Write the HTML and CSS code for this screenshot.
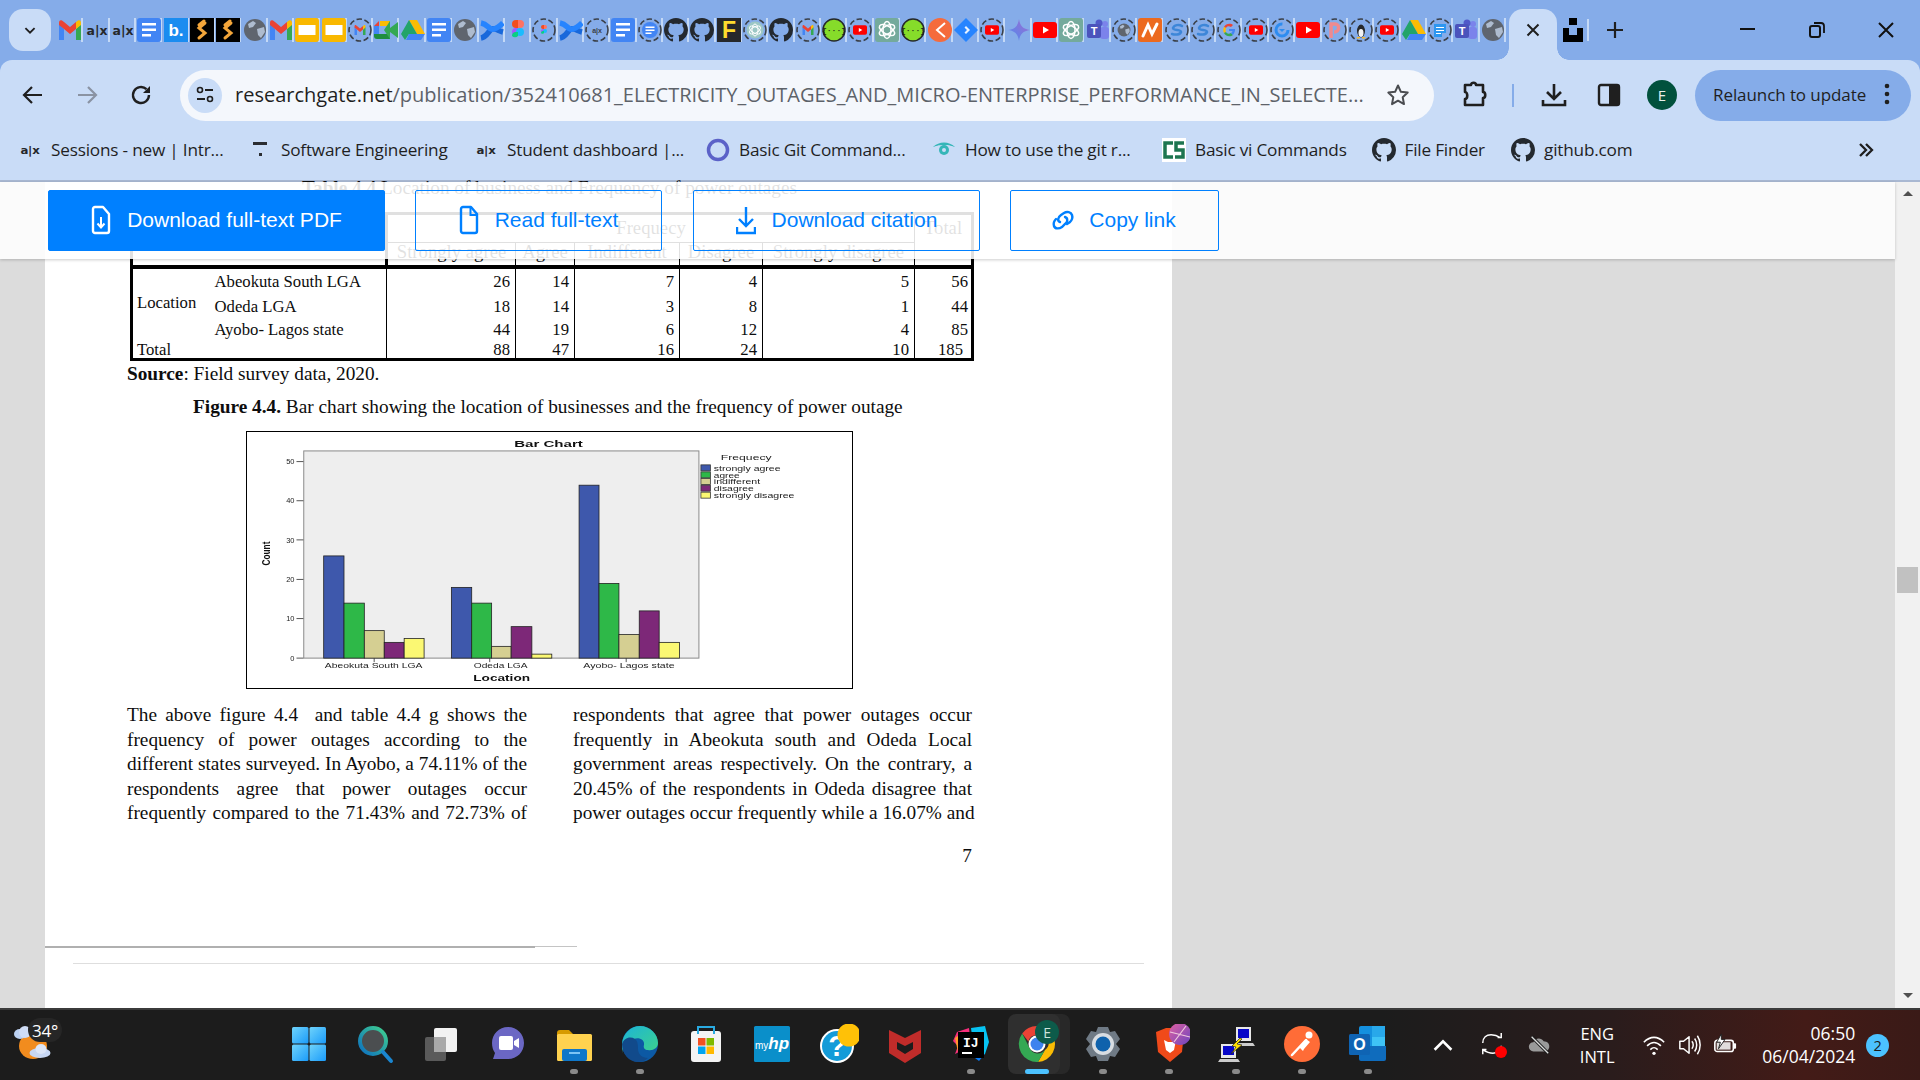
FILE: index.html
```html
<!DOCTYPE html>
<html lang="en">
<head>
<meta charset="utf-8">
<title>ResearchGate</title>
<link rel="stylesheet" href="styles.css">
</head>
<body>
<svg class="defs" aria-hidden="true">
  <defs>
    <linearGradient id="gStart" x1="0" y1="0" x2="1" y2="1"><stop offset="0" stop-color="#6fd3fb"/><stop offset="1" stop-color="#1a9bfa"/></linearGradient>
    <linearGradient id="gGem" x1="0" y1="1" x2="1" y2="0"><stop offset="0" stop-color="#4c8df0"/><stop offset="1" stop-color="#a06ad0"/></linearGradient>
    <linearGradient id="gEdge" x1="0" y1="0" x2="1" y2="1"><stop offset="0" stop-color="#1cb4d8"/><stop offset="1" stop-color="#3ed38a"/></linearGradient>
    <linearGradient id="gSearch" x1="0" y1="1" x2="1" y2="0"><stop offset="0" stop-color="#0d6fc0"/><stop offset="1" stop-color="#3fcf8e"/></linearGradient>
    <linearGradient id="gBrave" x1="0" y1="0" x2="1" y2="1"><stop offset="0" stop-color="#e060a0"/><stop offset="1" stop-color="#6a45c0"/></linearGradient>

    <symbol id="gmail" viewBox="0 0 24 24"><path fill="#4285f4" d="M1 22h5V11L1 6z"/><path fill="#34a853" d="M18 22h5V6l-5 5z"/><path fill="#ea4335" d="M6 11l6 5 6-5V4l-6 5-6-5-2-1.500C2 1.500 1 3 1 5v2z"/><path fill="#fbbc04" d="M18 4v7l5-4V5c0-2-1-3.500-3-2.500z"/></symbol>
    <symbol id="alx" viewBox="0 0 24 24"><text x="12" y="16.500" text-anchor="middle" class="s-alx" textLength="21" lengthAdjust="spacingAndGlyphs">a|x</text></symbol>
    <symbol id="docs" viewBox="0 0 24 24"><rect width="24" height="24" rx="3" fill="#4285f4"/><path fill="#fff" d="M5 5h14v2.500H5zM5 10.500h14V13H5zM5 16h9v2.500H5z"/></symbol>
    <symbol id="bdot" viewBox="0 0 24 24"><rect width="24" height="24" fill="#1a8cf0"/><text x="12" y="18" text-anchor="middle" class="s-b">b.</text></symbol>
    <symbol id="stack" viewBox="0 0 24 24"><rect width="24" height="24" fill="#000"/><path fill="none" stroke="#f4a63a" stroke-width="3" stroke-linecap="round" d="M15 5l-6 5 6 5-6 5M14 3l-5 4"/></symbol>
    <symbol id="globe" viewBox="0 0 24 24"><circle cx="12" cy="12" r="11" fill="#5f656e"/><path fill="#aebccf" d="M5 6l5-3 3 2-3 4-4 1zM14 11l7-2 1 5-4 6-3-3z"/></symbol>
    <symbol id="slides" viewBox="0 0 24 24"><rect width="24" height="24" rx="3" fill="#f9b800"/><rect x="3.500" y="7" width="17" height="10" fill="#fff"/></symbol>
    <symbol id="ring" viewBox="0 0 24 24"><circle cx="12" cy="12" r="11" fill="none" stroke="#3a3f47" stroke-width="1.600" stroke-dasharray="5.500 2.500"/></symbol>
    <symbol id="meet" viewBox="0 0 24 24"><path fill="#fbbc04" d="M6 3h10v5H6z"/><path fill="#ea4335" d="M0 8l5-5v5z"/><path fill="#4285f4" d="M0 8h5v8H0z"/><path fill="#1e8e3e" d="M5 16h11v5H3c-2 0-3-1-3-3v-2z"/><path fill="#34a853" d="M16 3v18l-6-9zM16 10l8-6v16l-8-6z"/></symbol>
    <symbol id="drive" viewBox="0 0 24 24"><path fill="#fbbc04" d="M8 2h8l8 14h-8z"/><path fill="#1ea362" d="M8 2l8 14H8l-4 6-4-6z" opacity=".95"/><path fill="#4285f4" d="M5 22l3-6h16l-4 6z"/></symbol>
    <symbol id="conf" viewBox="0 0 24 24"><path fill="none" stroke="#1868db" stroke-width="5.500" d="M1 20c6-1 8-8 11-9 3-1 7 2 11 3"/><path fill="none" stroke="#2684ff" stroke-width="5.500" d="M1 5c6 1 7 5 10 6 3 1 7-1 12-6"/></symbol>
    <symbol id="figma" viewBox="0 0 24 24"><path fill="#f24e1e" d="M6 6a4 4 0 0 1 4-4h2v8h-2a4 4 0 0 1-4-4z"/><path fill="#ff7262" d="M12 2h2a4 4 0 0 1 0 8h-2z"/><path fill="#a259ff" d="M6 14a4 4 0 0 1 4-4h2v8h-2a4 4 0 0 1-4-4z"/><circle cx="14" cy="14" r="4" fill="#1abcfe"/><path fill="#0acf83" d="M6 18a4 4 0 0 1 4-4h2v4a4 4 0 0 1-6 0z"/></symbol>
    <symbol id="gh" viewBox="0 0 16 16"><path fill="#24292f" d="M8 0C3.580 0 0 3.580 0 8c0 3.540 2.290 6.530 5.470 7.590.4.070.55-.17.55-.38 0-.19-.01-.82-.01-1.490-2.010.37-2.530-.49-2.690-.94-.09-.23-.48-.94-.82-1.130-.28-.15-.68-.52-.01-.53.63-.01 1.080.58 1.230.82.72 1.210 1.870.87 2.330.66.07-.52.28-.87.51-1.070-1.780-.2-3.640-.89-3.640-3.950 0-.87.31-1.590.82-2.150-.08-.2-.36-1.020.08-2.120 0 0 .67-.21 2.200.82.64-.18 1.320-.27 2-.27.68 0 1.360.09 2 .27 1.530-1.040 2.200-.82 2.200-.82.44 1.100.16 1.920.08 2.120.51.56.82 1.270.82 2.150 0 3.070-1.870 3.750-3.650 3.950.29.25.54.73.54 1.480 0 1.070-.01 1.930-.01 2.200 0 .21.15.46.55.38A8.013 8.013 0 0 0 16 8c0-4.420-3.580-8-8-8z"/></symbol>
    <symbol id="fy" viewBox="0 0 24 24"><rect width="24" height="24" fill="#26282b"/><text x="12" y="20" text-anchor="middle" class="s-f">F</text></symbol>
    <symbol id="gpt" viewBox="0 0 24 24"><rect width="24" height="24" rx="3" fill="#74aa9c"/><g fill="none" stroke="#fff" stroke-width="1.500"><ellipse cx="12" cy="12" rx="4" ry="8.500"/><ellipse cx="12" cy="12" rx="4" ry="8.500" transform="rotate(60 12 12)"/><ellipse cx="12" cy="12" rx="4" ry="8.500" transform="rotate(120 12 12)"/></g></symbol>
    <symbol id="yt" viewBox="0 0 24 24"><rect y="4" width="24" height="16" rx="3" fill="#f00"/><path fill="#fff" d="M10 8.500l6 3.500-6 3.500z"/></symbol>
    <symbol id="clickup" viewBox="0 0 24 24"><circle cx="12" cy="12" r="12" fill="#f56b3c"/><path fill="none" stroke="#fff" stroke-width="2" d="M17 5l-8 7 8 7"/></symbol>
    <symbol id="jira" viewBox="0 0 24 24"><path fill="#2684ff" d="M12 0l12 12-12 12L0 12z"/><path fill="#fff" opacity=".9" d="M12 8l4 4-4 4-1.500-1.500L13 12l-2.500-2.500z"/></symbol>
    <symbol id="gemini" viewBox="0 0 24 24"><path fill="url(#gGem)" d="M12 1c1 7 4 10 11 11-7 1-10 4-11 11-1-7-4-10-11-11 7-1 10-4 11-11z"/></symbol>
    <symbol id="teams" viewBox="0 0 24 24"><circle cx="19" cy="6" r="3" fill="#7b83eb"/><rect x="14" y="9" width="9" height="12" rx="3" fill="#7b83eb"/><circle cx="13" cy="5" r="3.500" fill="#5059c9"/><rect x="1" y="6" width="14" height="14" rx="2" fill="#4b53bc"/><text x="8" y="17" text-anchor="middle" class="s-t">T</text></symbol>
    <symbol id="nrel" viewBox="0 0 24 24"><rect width="24" height="24" rx="3" fill="#ec6a1f"/><path fill="none" stroke="#fff" stroke-width="3" stroke-linecap="round" d="M5 18l5-11 4 9 5-10"/></symbol>

    <symbol id="rgmail" viewBox="0 0 24 24"><use href="#ring"/><use href="#gmail" x="6" y="6" width="12" height="12"/></symbol>
    <symbol id="rfigma" viewBox="0 0 24 24"><use href="#ring"/><use href="#figma" x="6" y="5" width="12" height="14"/></symbol>
    <symbol id="ralx" viewBox="0 0 24 24"><use href="#ring"/><text x="12" y="15" text-anchor="middle" class="s-ralx">a|x</text></symbol>
    <symbol id="rdocs" viewBox="0 0 24 24"><circle cx="12" cy="12" r="8" fill="#4285f4"/><use href="#ring"/><path fill="#fff" d="M7.500 8.500h9V10h-9zM7.500 11.500h9V13h-9zM7.500 14.500h6V16h-6z"/></symbol>
    <symbol id="rgpt" viewBox="0 0 24 24"><circle cx="12" cy="12" r="8.500" fill="#9cc7c5"/><use href="#ring"/><g fill="none" stroke="#fff" stroke-width="1"><ellipse cx="12" cy="12" rx="3" ry="6"/><ellipse cx="12" cy="12" rx="3" ry="6" transform="rotate(60 12 12)"/><ellipse cx="12" cy="12" rx="3" ry="6" transform="rotate(120 12 12)"/></g></symbol>
    <symbol id="rgreen" viewBox="0 0 24 24"><circle cx="12" cy="12" r="11" fill="#86dc2a" stroke="#26282b" stroke-width="1.500"/><text x="12" y="15" text-anchor="middle" class="s-br">{···}</text></symbol>
    <symbol id="ryt" viewBox="0 0 24 24"><use href="#ring"/><use href="#yt" x="5" y="5" width="14" height="14"/></symbol>
    <symbol id="rglobe" viewBox="0 0 24 24"><use href="#ring"/><use href="#globe" x="5" y="5" width="14" height="14"/></symbol>
    <symbol id="rs" viewBox="0 0 24 24"><use href="#ring"/><path fill="none" stroke="#3d86d8" stroke-width="2.500" stroke-linecap="round" d="M17 8c-3-2-8-1-9 2 0 3 8 1 8 4-1 3-6 3-9 2"/></symbol>
    <symbol id="rg" viewBox="0 0 24 24"><use href="#ring"/><path fill="#ea4335" d="M7 9c2-4 7-4 9-2l-2 2c-2-1-4-1-5 1z"/><path fill="#fbbc04" d="M7 9c-1 2-1 4 0 6l2-1c-.5-1-.5-2 0-4z"/><path fill="#34a853" d="M7 15c2 4 7 4 9 2l-2-2c-2 1-4 1-5-1z"/><path fill="#4285f4" d="M12 11h6c.2 2-.5 4-2 6l-2-2c1-.5 1-1 1.500-2H12z"/></symbol>
    <symbol id="rblue" viewBox="0 0 24 24"><use href="#ring"/><circle cx="12" cy="12" r="6" fill="none" stroke="#2d8cf0" stroke-width="3" stroke-dasharray="28 10"/><path fill="#2d8cf0" d="M12 14l-3-3h6z"/></symbol>
    <symbol id="rpink" viewBox="0 0 24 24"><use href="#ring"/><path fill="none" stroke="#ef8a8f" stroke-width="3.500" d="M8 20V6h4c5 0 5 8-1 8"/></symbol>
    <symbol id="rlinux" viewBox="0 0 24 24"><use href="#ring"/><ellipse cx="12" cy="13" rx="4" ry="6.500" fill="#26282b"/><ellipse cx="12" cy="15" rx="2.500" ry="4" fill="#f3f3f3"/><path fill="#f5b82e" d="M8 19h3v1.500H7.500zM13 19h3.500l-.5 1.500h-3z"/></symbol>
    <symbol id="rkeep" viewBox="0 0 24 24"><use href="#ring"/><path fill="#2d96f0" d="M6 6h12v9h-4v4H6z"/><path fill="#fff" d="M8 9h8v1H8zM8 12h8v1H8zM8 15h5v1H8z"/></symbol>

    <symbol id="i-chev" viewBox="0 0 24 24"><path fill="none" stroke="#1f1f1f" stroke-width="2" d="M7 10l5 5 5-5"/></symbol>
    <symbol id="i-star" viewBox="0 0 24 24"><path fill="none" stroke="#4a4c50" stroke-width="2" stroke-linejoin="round" d="M12 2.500l2.900 6.300 6.800.8-5 4.700 1.300 6.800-6-3.400-6 3.400 1.300-6.800-5-4.700 6.800-.8z"/></symbol>
    <symbol id="i-sun" viewBox="0 0 40 40"><ellipse cx="20" cy="23" rx="14" ry="13" fill="#f28c1e"/><ellipse cx="7" cy="11" rx="6" ry="5" fill="#bcd1f2"/><ellipse cx="12" cy="9" rx="6" ry="6" fill="#cfdcf5"/><ellipse cx="27" cy="30" rx="10.500" ry="5" fill="#c7d7f4"/><ellipse cx="28" cy="26" rx="5.500" ry="5" fill="#dce6f8"/></symbol>
  </defs>
</svg>

<div class="app">
  <header class="tabstrip">
    <button class="tabsearch"><svg class="ic22"><use href="#i-chev"/></svg></button>
    <div class="favs">
      <span class="fav"><svg><use href="#gmail"/></svg></span>
      <span class="fav"><svg><use href="#alx"/></svg></span>
      <span class="fav"><svg><use href="#alx"/></svg></span>
      <span class="fav"><svg><use href="#docs"/></svg></span>
      <span class="fav"><svg><use href="#bdot"/></svg></span>
      <span class="fav"><svg><use href="#stack"/></svg></span>
      <span class="fav"><svg><use href="#stack"/></svg></span>
      <span class="fav"><svg><use href="#globe"/></svg></span>
      <span class="fav"><svg><use href="#gmail"/></svg></span>
      <span class="fav"><svg><use href="#slides"/></svg></span>
      <span class="fav"><svg><use href="#slides"/></svg></span>
      <span class="fav"><svg><use href="#rgmail"/></svg></span>
      <span class="fav"><svg><use href="#meet"/></svg></span>
      <span class="fav"><svg><use href="#drive"/></svg></span>
      <span class="fav"><svg><use href="#docs"/></svg></span>
      <span class="fav"><svg><use href="#globe"/></svg></span>
      <span class="fav"><svg><use href="#conf"/></svg></span>
      <span class="fav"><svg><use href="#figma"/></svg></span>
      <span class="fav"><svg><use href="#rfigma"/></svg></span>
      <span class="fav"><svg><use href="#conf"/></svg></span>
      <span class="fav"><svg><use href="#ralx"/></svg></span>
      <span class="fav"><svg><use href="#docs"/></svg></span>
      <span class="fav"><svg><use href="#rdocs"/></svg></span>
      <span class="fav"><svg><use href="#gh"/></svg></span>
      <span class="fav"><svg><use href="#gh"/></svg></span>
      <span class="fav"><svg><use href="#fy"/></svg></span>
      <span class="fav"><svg><use href="#rgpt"/></svg></span>
      <span class="fav"><svg><use href="#gh"/></svg></span>
      <span class="fav"><svg><use href="#rgmail"/></svg></span>
      <span class="fav"><svg><use href="#rgreen"/></svg></span>
      <span class="fav"><svg><use href="#ryt"/></svg></span>
      <span class="fav"><svg><use href="#gpt"/></svg></span>
      <span class="fav"><svg><use href="#rgreen"/></svg></span>
      <span class="fav"><svg><use href="#clickup"/></svg></span>
      <span class="fav"><svg><use href="#jira"/></svg></span>
      <span class="fav"><svg><use href="#ryt"/></svg></span>
      <span class="fav"><svg><use href="#gemini"/></svg></span>
      <span class="fav"><svg><use href="#yt"/></svg></span>
      <span class="fav"><svg><use href="#gpt"/></svg></span>
      <span class="fav"><svg><use href="#teams"/></svg></span>
      <span class="fav"><svg><use href="#rglobe"/></svg></span>
      <span class="fav"><svg><use href="#nrel"/></svg></span>
      <span class="fav"><svg><use href="#rs"/></svg></span>
      <span class="fav"><svg><use href="#rs"/></svg></span>
      <span class="fav"><svg><use href="#rg"/></svg></span>
      <span class="fav"><svg><use href="#ryt"/></svg></span>
      <span class="fav"><svg><use href="#rblue"/></svg></span>
      <span class="fav"><svg><use href="#yt"/></svg></span>
      <span class="fav"><svg><use href="#rpink"/></svg></span>
      <span class="fav"><svg><use href="#rlinux"/></svg></span>
      <span class="fav"><svg><use href="#ryt"/></svg></span>
      <span class="fav"><svg><use href="#drive"/></svg></span>
      <span class="fav"><svg><use href="#rkeep"/></svg></span>
      <span class="fav"><svg><use href="#teams"/></svg></span>
      <span class="fav"><svg><use href="#globe"/></svg></span>
    </div>
    <div class="activetab"><svg class="ic20" viewBox="0 0 20 20"><path stroke="#1f1f1f" stroke-width="2" d="M4.500 4.500l11 11M15.500 4.500l-11 11"/></svg></div>
    <svg class="unsplash" viewBox="0 0 20 24"><path d="M6 0h8v7H6zM0 10h6v7h8v-7h6v14H0z" fill="#000"/></svg>
    <span class="tabsep"></span>
    <svg class="plus" viewBox="0 0 20 20"><path stroke="#1f1f1f" stroke-width="2.200" d="M10 2v16M2 10h16"/></svg>
    <div class="winctl">
      <span class="wbtn"><svg class="ic20" viewBox="0 0 20 20"><path stroke="#111" stroke-width="2" d="M2 9h15"/></svg></span>
      <span class="wbtn"><svg class="ic20" viewBox="0 0 20 20"><rect x="3" y="6" width="10" height="11" rx="2" fill="none" stroke="#111" stroke-width="2"/><path fill="none" stroke="#111" stroke-width="1.800" d="M7 3h7c2 0 3 1 3 3v7"/></svg></span>
      <span class="wbtn"><svg class="ic20" viewBox="0 0 20 20"><path stroke="#111" stroke-width="2" d="M3 3l14 14M17 3L3 17"/></svg></span>
    </div>
  </header>

  <div class="toolbar">
    <span class="navbtn"><svg class="ic24" viewBox="0 0 24 24"><path fill="none" stroke="#1f1f1f" stroke-width="2.200" d="M21 12H4M11 4l-8 8 8 8"/></svg></span>
    <span class="navbtn"><svg class="ic24" viewBox="0 0 24 24"><path fill="none" stroke="#8a93a3" stroke-width="2.200" d="M3 12h17M13 4l8 8-8 8"/></svg></span>
    <span class="navbtn"><svg class="ic24" viewBox="0 0 24 24"><path fill="none" stroke="#1f1f1f" stroke-width="2.400" d="M20 12a8 8 0 1 1-2.500-5.800"/><path fill="#1f1f1f" d="M21 3v7h-7z"/></svg></span>
    <div class="omnibox">
      <span class="sitechip"><svg class="ic20" viewBox="0 0 20 20"><circle cx="5" cy="5" r="2.500" fill="none" stroke="#1f1f1f" stroke-width="1.600"/><path stroke="#1f1f1f" stroke-width="1.800" d="M10 5h8M2 14h8"/><circle cx="15" cy="14" r="2.500" fill="none" stroke="#1f1f1f" stroke-width="1.600"/></svg></span>
      <span class="url"><b class="host">researchgate.net</b>/publication/352410681_ELECTRICITY_OUTAGES_AND_MICRO-ENTERPRISE_PERFORMANCE_IN_SELECTE...</span>
      <svg class="star"><use href="#i-star"/></svg>
    </div>
    <svg class="tb-puzzle" viewBox="0 0 26 28"><path fill="none" stroke="#1f1f1f" stroke-width="2.600" stroke-linejoin="round" d="M4 4h6c0-3 5-3 5 0h7v7c3 0 3 6 0 6v7H4v-6c3 0 3-7 0-7z"/></svg>
    <span class="tb-div"></span>
    <svg class="tb-dl" viewBox="0 0 26 26"><path fill="none" stroke="#1f1f1f" stroke-width="2.600" d="M13 2v14M6 10l7 7 7-7M2 18v5h22v-5"/></svg>
    <svg class="tb-side" viewBox="0 0 24 24"><rect x="2" y="2" width="20" height="20" rx="2" fill="none" stroke="#1f1f1f" stroke-width="2.400"/><rect x="12" y="2" width="10" height="20" fill="#1f1f1f"/></svg>
    <span class="avatar">E</span>
    <div class="relaunch"><span>Relaunch to update</span><svg class="dots" viewBox="0 0 6 24"><circle cx="3" cy="4" r="2.300"/><circle cx="3" cy="12" r="2.300"/><circle cx="3" cy="20" r="2.300"/></svg></div>
  </div>

  <nav class="bookmarks">
    <a class="bm"><span class="bm-ic"><svg class="ic22"><use href="#alx"/></svg></span>Sessions - new | Intr...</a>
    <a class="bm"><span class="bm-ic"><svg class="ic20" viewBox="0 0 20 20"><path d="M3 2h14v3H3z" fill="#2a2d32"/><rect x="9" y="13" width="3" height="3" fill="#2a2d32"/></svg></span>Software Engineering</a>
    <a class="bm"><span class="bm-ic"><svg class="ic22"><use href="#alx"/></svg></span>Student dashboard |...</a>
    <a class="bm"><span class="bm-ic"><svg class="ic24" viewBox="0 0 24 24"><circle cx="12" cy="12" r="9.500" fill="none" stroke="#5b62c8" stroke-width="3.500"/></svg></span>Basic Git Command...</a>
    <a class="bm"><span class="bm-ic"><svg class="ic24" viewBox="0 0 24 24"><path fill="#35b6b8" d="M1 9c6-6 16-6 22 0-3-1-5-2-11-2S4 8 1 9z"/><circle cx="12" cy="12" r="5" fill="#35b6b8"/><circle cx="12" cy="12" r="2" fill="#c9dcf7"/></svg></span>How to use the git r...</a>
    <a class="bm"><span class="bm-ic"><svg class="ic24" viewBox="0 0 24 24"><rect width="24" height="24" fill="#fff"/><path fill="none" stroke="#1d7550" stroke-width="3.500" d="M11 5H3v14h8M22 5h-8v7h7v7h-8"/></svg></span>Basic vi Commands</a>
    <a class="bm"><span class="bm-ic"><svg class="ic24"><use href="#gh"/></svg></span>File Finder</a>
    <a class="bm"><span class="bm-ic"><svg class="ic24"><use href="#gh"/></svg></span>github.com</a>
    <svg class="more" viewBox="0 0 16 16"><path fill="none" stroke="#1f1f1f" stroke-width="2.300" d="M2 2l6 6-6 6M8 2l6 6-6 6"/></svg>
  </nav>
  <div class="chrome-sep"></div>

  <main class="viewport">
    <div class="gutter"></div>
    <article class="page">
      <div class="doc">
        <p class="tbl-title"><b>Table 4.4</b> Location of business and Frequency of power outages</p>
        <table class="data">
          <colgroup><col class="c1"><col class="c2"><col class="c3"><col class="c4"><col class="c5"><col class="c6"><col class="c7"><col class="c8"></colgroup>
          <thead>
            <tr class="h1"><th colspan="2" rowspan="2" class="blank"></th><th colspan="5">Frequecy</th><th rowspan="2" class="tot">Total</th></tr>
            <tr class="h2"><th>Strongly agree</th><th>Agree</th><th>Indifferent</th><th>Disagree</th><th>Strongly disagree</th></tr>
          </thead>
          <tbody>
            <tr class="r1"><td rowspan="3" class="lbl lbl-loc">Location</td><td class="lbl2">Abeokuta South LGA</td><td>26</td><td>14</td><td>7</td><td>4</td><td>5</td><td class="last">56</td></tr>
            <tr class="r2"><td class="lbl2">Odeda LGA</td><td>18</td><td>14</td><td>3</td><td>8</td><td>1</td><td class="last">44</td></tr>
            <tr class="r3"><td class="lbl2">Ayobo- Lagos state</td><td>44</td><td>19</td><td>6</td><td>12</td><td>4</td><td class="last">85</td></tr>
            <tr class="r4"><td class="lbl">Total</td><td class="lbl2"></td><td>88</td><td>47</td><td>16</td><td>24</td><td>10</td><td class="grand">185</td></tr>
          </tbody>
        </table>
        <p class="source"><b>Source</b>: Field survey data, 2020.</p>
        <p class="caption"><b>Figure 4.4.</b> Bar chart showing the location of businesses and the frequency of power outage</p>
        <figure class="chart">
          <svg viewBox="0 0 606 257" width="605" height="256">
            <rect x="56.300" y="19" width="396.700" height="208" fill="#eee" stroke="#8a8a8a"/>
            <g stroke="#555" stroke-width="1"><path d="M49 29.700h7M49 69h7M49 108.300h7M49 148h7M49 187.300h7M49 227h7M127 227v4M243 227v4M380 227v4"/></g>
            <g class="bars" stroke="#222" stroke-width=".8">
              <rect class="b1" x="76.300" y="124.400" width="20.400" height="102.600"/>
              <rect class="b2" x="96.700" y="171.800" width="20.400" height="55.200"/>
              <rect class="b3" x="117.100" y="199.400" width="20" height="27.600"/>
              <rect class="b4" x="137.100" y="211.200" width="20" height="15.800"/>
              <rect class="b5" x="157.100" y="207.300" width="20" height="19.700"/>
              <rect class="b1" x="204.500" y="156" width="20.400" height="71"/>
              <rect class="b2" x="224.900" y="171.800" width="20" height="55.200"/>
              <rect class="b3" x="244.900" y="215.200" width="19.600" height="11.800"/>
              <rect class="b4" x="264.500" y="195.400" width="20.800" height="31.600"/>
              <rect class="b5" x="285.300" y="223" width="20" height="4"/>
              <rect class="b1" x="332.700" y="53.400" width="20" height="173.600"/>
              <rect class="b2" x="352.700" y="152" width="20" height="75"/>
              <rect class="b3" x="372.700" y="203.300" width="20.400" height="23.700"/>
              <rect class="b4" x="393.100" y="179.600" width="20" height="47.400"/>
              <rect class="b5" x="413.100" y="211.200" width="20.400" height="15.800"/>
            </g>
            <g class="ax">
              <text x="47" y="32" text-anchor="end">50</text><text x="47" y="71.500" text-anchor="end">40</text><text x="47" y="111" text-anchor="end">30</text><text x="47" y="150.500" text-anchor="end">20</text><text x="47" y="190" text-anchor="end">10</text><text x="47" y="229.500" text-anchor="end">0</text>
              <text x="77.500" y="237" textLength="98" lengthAdjust="spacingAndGlyphs">Abeokuta South LGA</text>
              <text x="227" y="237" textLength="54" lengthAdjust="spacingAndGlyphs">Odeda LGA</text>
              <text x="337" y="237" textLength="91.600" lengthAdjust="spacingAndGlyphs">Ayobo- Lagos state</text>
              <text x="475" y="28.500" textLength="51" lengthAdjust="spacingAndGlyphs">Frequecy</text>
              <text x="468" y="38.800" textLength="67" lengthAdjust="spacingAndGlyphs">strongly agree</text>
              <text x="468" y="45.800" textLength="26" lengthAdjust="spacingAndGlyphs">agree</text>
              <text x="468" y="52.500" textLength="46.500" lengthAdjust="spacingAndGlyphs">indifferent</text>
              <text x="468" y="59.200" textLength="40" lengthAdjust="spacingAndGlyphs">disagree</text>
              <text x="468" y="66.200" textLength="81" lengthAdjust="spacingAndGlyphs">strongly disagree</text>
            </g>
            <g class="axb">
              <text x="267.500" y="15.500" textLength="69" lengthAdjust="spacingAndGlyphs">Bar Chart</text>
              <text x="226.500" y="249.500" textLength="57" lengthAdjust="spacingAndGlyphs">Location</text>
              <text class="ax-count" transform="translate(22 134) rotate(-90)" textLength="24" lengthAdjust="spacingAndGlyphs">Count</text>
            </g>
            <g stroke="#333" stroke-width=".8">
              <rect class="b1" x="455" y="33" width="9.500" height="6"/>
              <rect class="b2" x="455" y="40" width="9.500" height="6"/>
              <rect class="b3" x="455" y="46.700" width="9.500" height="6"/>
              <rect class="b4" x="455" y="53.400" width="9.500" height="6"/>
              <rect class="b5" x="455" y="60.400" width="9.500" height="6"/>
            </g>
          </svg>
        </figure>
        <div class="cols">
          <div class="col">
            <span class="ln">The above figure 4.4 &nbsp;and table 4.4 g shows the</span>
            <span class="ln">frequency of power outages according to the</span>
            <span class="ln">different states surveyed. In Ayobo, a 74.11% of the</span>
            <span class="ln">respondents agree that power outages occur</span>
            <span class="ln">frequently compared to the 71.43% and 72.73% of</span>
          </div>
          <div class="col col-r">
            <span class="ln">respondents that agree that power outages occur</span>
            <span class="ln">frequently in Abeokuta south and Odeda Local</span>
            <span class="ln">government areas respectively. On the contrary, a</span>
            <span class="ln">20.45% of the respondents in Odeda disagree that</span>
            <span class="ln">power outages occur frequently while a 16.07% and</span>
          </div>
        </div>
        <p class="pageno">7</p>
      </div>
      <div class="rule-top"><span class="rt-a"></span><span class="rt-b"></span></div>
      <div class="rule-bottom"></div>
    </article>
    <div class="margin-right"></div>
    <aside class="scrollbar">
      <span class="sb-up"></span>
      <span class="sb-track"><span class="sb-thumb"></span></span>
      <span class="sb-down"></span>
    </aside>

    <div class="sticky">
      <a class="cta primary"><svg class="cta-ic" viewBox="0 0 20 30"><path fill="none" stroke="#fff" stroke-width="2.400" stroke-linejoin="round" d="M2 4a2 2 0 0 1 2-2h8l6 7v17a2 2 0 0 1-2 2H4a2 2 0 0 1-2-2z"/><path fill="none" stroke="#fff" stroke-width="2" d="M10 12v10M6.500 18.500L10 22.500l3.500-4"/></svg>Download full-text PDF</a>
      <a class="cta"><svg class="cta-ic" viewBox="0 0 20 30"><path fill="none" stroke="#0080ff" stroke-width="2.400" stroke-linejoin="round" d="M2 4a2 2 0 0 1 2-2h8l6 7v17a2 2 0 0 1-2 2H4a2 2 0 0 1-2-2z"/><path fill="none" stroke="#0080ff" stroke-width="2" d="M11.500 2v8h6.500"/></svg>Read full-text</a>
      <a class="cta cta-mid"><svg class="cta-ic" viewBox="0 0 20 30"><path fill="none" stroke="#0080ff" stroke-width="2.400" d="M10 2v19M3 14l7 7 7-7M1 22v6h18v-6"/></svg>Download citation</a>
      <a class="cta cta-link"><svg class="cta-ic wide" viewBox="0 0 26 24"><path fill="none" stroke="#0080ff" stroke-width="2.400" stroke-linecap="round" d="M10 14c-3-1-2-5 1-7l3-2c3-2 7-1 8 2s0 5-2 7l-3 2M15 9c3 1 3 5 0 7l-3 3c-3 2-7 2-8-1-1-3 0-5 2-7"/></svg>Copy link</a>
    </div>
  </main>

  <footer class="taskbar">
    <div class="weather">
      <svg class="wx"><use href="#i-sun"/></svg>
      <span class="temp">34°</span>
    </div>
    <div class="apps">
      <span class="app-i"><svg class="ti" viewBox="0 0 40 40"><rect x="3" y="3" width="16.500" height="16.500" rx="1.500" fill="url(#gStart)"/><rect x="20.500" y="3" width="16.500" height="16.500" rx="1.500" fill="url(#gStart)"/><rect x="3" y="20.500" width="16.500" height="16.500" rx="1.500" fill="url(#gStart)"/><rect x="20.500" y="20.500" width="16.500" height="16.500" rx="1.500" fill="url(#gStart)"/></svg></span>
      <span class="app-i"><svg class="ti" viewBox="0 0 40 40"><circle cx="18" cy="17" r="13" fill="#4b4e50" stroke="url(#gSearch)" stroke-width="4"/><path stroke="#1a86d0" stroke-width="4" stroke-linecap="round" d="M28 28l8 9"/></svg></span>
      <span class="app-i"><svg class="ti" viewBox="0 0 40 40"><rect x="4" y="13" width="21" height="24" rx="2" fill="#5a5a5a"/><rect x="13" y="4" width="23" height="24" rx="2" fill="#f2f2f2"/><rect x="13" y="13" width="12" height="15" fill="#a9a9a9"/></svg></span>
      <span class="app-i"><svg class="ti" viewBox="0 0 40 40"><path fill="#6b67c4" d="M20 3c9 0 16 7 16 16s-7 16-16 16H5l2-6c-2-3-3-6-3-10C4 10 11 3 20 3z"/><rect x="11" y="12" width="14" height="14" rx="2" fill="#fff"/><path fill="#fff" d="M26 17l5-3v10l-5-3z"/></svg></span>
      <span class="app-i on"><svg class="ti" viewBox="0 0 40 40"><path fill="#d79b00" d="M3 9a3 3 0 0 1 3-3h9l4 4v4H3z"/><rect x="3" y="10" width="35" height="27" rx="1.500" fill="#ffd24f"/><rect x="8" y="25" width="25" height="12" rx="2" fill="#0f77c9"/><rect x="15" y="28" width="11" height="2" fill="#7cc4f5"/></svg></span>
      <span class="app-i on"><svg class="ti" viewBox="0 0 40 40"><circle cx="20" cy="20" r="18" fill="#0c59a4"/><path fill="url(#gEdge)" d="M2 20C3 9 11 2 20 2c10 0 18 8 18 17 0 5-5 8-10 7-3 0-5-2-4-5 1-5-5-8-10-6C7 17 2 22 2 30z"/><path fill="#114a8b" d="M2 20c2-6 8-8 13-5 3 2 3 7 3 10 0 5 4 9 10 9-3 3-7 4-10 4C9 38 2 30 2 20z"/></svg></span>
      <span class="app-i"><svg class="ti" viewBox="0 0 40 40"><rect x="5" y="7" width="30" height="31" rx="3" fill="#f4f4f4"/><path fill="none" stroke="#29aae1" stroke-width="2" d="M12 10V3h16v7"/><rect x="12" y="14" width="7.500" height="7.500" fill="#f25022"/><rect x="20.500" y="14" width="7.500" height="7.500" fill="#7fba00"/><rect x="12" y="22.500" width="7.500" height="7.500" fill="#00a4ef"/><rect x="20.500" y="22.500" width="7.500" height="7.500" fill="#ffb900"/></svg></span>
      <span class="app-i"><svg class="ti" viewBox="0 0 40 40"><rect x="2" y="2" width="36" height="36" rx="1.500" fill="#0a8fca"/><text x="20" y="25" text-anchor="middle" class="s-hp">my<tspan class="s-hp2">hp</tspan></text></svg></span>
      <span class="app-i"><svg class="ti" viewBox="0 0 40 40"><circle cx="18" cy="22" r="17" fill="#fff"/><circle cx="18" cy="22" r="15" fill="#139bd8"/><text x="18" y="32" text-anchor="middle" class="s-q">?</text><circle cx="30" cy="11" r="11.500" fill="#ffc107"/></svg></span>
      <span class="app-i"><svg class="ti" viewBox="0 0 40 40"><path fill="#c02c2a" d="M4 6l16 8 16-8v23L20 39 4 29z"/><path fill="#1c1c1c" d="M12 18l8 4 8-4v7l-8 5-8-5z"/></svg></span>
      <span class="app-i on"><svg class="ti" viewBox="0 0 40 40"><path fill="#f72d7b" d="M6 8l12-4 2 18-16 8 3-8-5-5z"/><path fill="#ff9a2c" d="M4 14l8-6 4 20-8 5z"/><path fill="#07c3f2" d="M20 4l14-2 4 16-4 12-10 4z"/><path fill="#087cfa" d="M24 34l10-4-6 7z"/><rect x="7" y="8" width="26" height="26" fill="#000"/><text x="12" y="23" class="s-ij">IJ</text><rect x="11" y="28" width="10" height="2" fill="#fff"/></svg></span>
      <span class="app-i chrome"><span class="stack-b"></span><span class="stack-f"></span><svg class="ti" viewBox="0 0 40 40"><path fill="#ea4335" d="M20 2a18 18 0 0 1 15.600 9H20a9 9 0 0 0-8.600 6.400L5.200 9.500A18 18 0 0 1 20 2z"/><path fill="#fbbc04" d="M35.600 11A18 18 0 0 1 21 38l7-12a9 9 0 0 0-.5-15z"/><path fill="#34a853" d="M5.200 9.500l7.600 15A9 9 0 0 0 28 26l-7 12A18 18 0 0 1 5.200 9.500z"/><circle cx="20" cy="20" r="8.500" fill="#fff"/><circle cx="20" cy="20" r="6.500" fill="#3d83ee"/></svg><span class="chrome-e">E</span></span>
      <span class="app-i on"><svg class="ti" viewBox="0 0 40 40"><path fill="#6f7a85" d="M15 3h10l2 5 5-1 5 8-4 5 4 5-5 8-5-1-2 5H15l-2-5-5 1-5-8 4-5-4-5 5-8 5 1z"/><circle cx="20" cy="20" r="11" fill="#d8dde2"/><circle cx="20" cy="20" r="7.500" fill="#0f62ac"/></svg></span>
      <span class="app-i on"><svg class="ti" viewBox="0 0 40 40"><path fill="#f04a1a" d="M6 8l10-4h8l10 4-2 20-12 10L8 28z"/><path fill="#fff" d="M14 16l4 2h4l4-2-2 10-4 3-4-3z"/><circle cx="30" cy="10" r="11" fill="url(#gBrave)"/><path stroke="#f0c8dc" stroke-width="1.200" d="M20 8l20 5M24 18l12-16"/></svg></span>
      <span class="app-i on"><svg class="ti" viewBox="0 0 40 40"><path fill="#e8e8e8" d="M20 3h15v14h-15z"/><rect x="22" y="5" width="11" height="9" fill="#0808c8"/><path fill="#ccc" d="M19 19h18l2 3H18z"/><path fill="#e8e8e8" d="M5 20h15v14H5z"/><rect x="7" y="22" width="11" height="9" fill="#0808c8"/><path fill="#ccc" d="M4 35h18l2 3H2z"/><path fill="#ffe000" stroke="#222" stroke-width=".7" d="M24 14l-8 8 4 1-5 7 11-9-5-1 5-5z"/></svg></span>
      <span class="app-i on"><svg class="ti" viewBox="0 0 40 40"><circle cx="20" cy="20" r="18" fill="#ff6c37"/><path stroke="#fff" stroke-width="2.500" stroke-linecap="round" d="M10 31l14-15"/><circle cx="27" cy="11" r="3.500" fill="#fff"/><path fill="#fff" d="M18 22l6-7 4 3-6 7-1 2-3-3z"/></svg></span>
      <span class="app-i on"><svg class="ti" viewBox="0 0 40 40"><rect x="11" y="2" width="26" height="22" rx="2" fill="#1490df"/><rect x="24" y="2" width="13" height="11" fill="#28a8ea"/><rect x="24" y="13" width="13" height="11" fill="#50d9ff" opacity=".7"/><path fill="#0f6cbd" d="M11 22h27v13a2 2 0 0 1-2 2H13a2 2 0 0 1-2-2z"/><rect x="1" y="10" width="21" height="21" rx="1.500" fill="#0f64b4"/><text x="11.500" y="26" text-anchor="middle" class="s-o">O</text></svg></span>
    </div>
    <div class="tray">
      <svg class="tr tr-chev" viewBox="0 0 20 20"><path fill="none" stroke="#fff" stroke-width="2.200" d="M3 14l7-7 7 7"/></svg>
      <span class="tr-sync"><svg class="tr" viewBox="0 0 26 26"><path fill="none" stroke="#fff" stroke-width="1.600" d="M3 12c0-6 4-9 9-9 4 0 7 1 10 3M19 6h4V1M23 15c0 5-4 8-9 8-4 0-8-2-11-4M7 19H3v5"/></svg><i class="rec"></i></span>
      <svg class="tr tr-cloud" viewBox="0 0 26 26"><path fill="#9a9a9a" d="M7 20a5 5 0 0 1 0-10c1-4 8-6 11-1 4 0 7 3 6 7-1 3-3 4-5 4z"/><path stroke="#1c1c1c" stroke-width="3.500" d="M5 4l18 18"/><path stroke="#ddd" stroke-width="1.400" d="M5 4l18 18"/></svg>
      <span class="lang"><span>ENG</span><span>INTL</span></span>
      <svg class="tr tr-wifi" viewBox="0 0 26 26"><path fill="none" stroke="#fff" stroke-width="1.700" d="M2 10c7-7 15-7 22 0M5.500 14c5-5 10-5 15 0M9 18c3-3 5-3 8 0"/><circle cx="13" cy="22" r="1.800" fill="#fff"/></svg>
      <svg class="tr tr-vol" viewBox="0 0 26 26"><path fill="none" stroke="#fff" stroke-width="1.600" stroke-linejoin="round" d="M2 9h4l6-5v18l-6-5H2zM15 9c2 2 2 6 0 8M18 6c3 4 3 10 0 14M21 3c4 6 4 14 0 20"/></svg>
      <svg class="tr tr-bat" viewBox="0 0 26 26"><rect x="2" y="8" width="20" height="12" rx="2.500" fill="none" stroke="#fff" stroke-width="1.700"/><rect x="22" y="11" width="3" height="6" rx="1" fill="#fff"/><rect x="4" y="10" width="15" height="8" fill="#fff" opacity=".85"/><path fill="#fff" stroke="#1c1c1c" d="M9 1L4 10h4l-2 7 7-10H9z"/></svg>
      <span class="clock"><span>06:50</span><span>06/04/2024</span></span>
      <span class="badge">2</span>
    </div>
  </footer>
</div>
</body>
</html>
```

FILE: styles.css
```css
* { box-sizing: border-box; }
html, body { margin: 0; padding: 0; width: 1920px; height: 1080px; overflow: hidden; }
body { font-family: "Open Sans", "Noto Sans", sans-serif; color: #1f1f1f; background: #85ace9; }
.defs { position: absolute; width: 0; height: 0; }
.app { display: flex; flex-direction: column; width: 1920px; height: 1080px; }
svg { display: block; flex: none; }
.ic20 { width: 20px; height: 20px; }
.ic22 { width: 22px; height: 22px; }
.ic24 { width: 24px; height: 24px; }

/* tab strip */
.tabstrip { display: flex; align-items: center; height: 60px; padding-left: 9px; background: #85ace9; flex: none; }
.tabsearch { width: 42px; height: 42px; margin: 9px 6px 0 0; padding: 0; border: 0; border-radius: 14px; background: #c9dcf7; display: flex; align-items: center; justify-content: center; align-self: flex-start; }
.favs { display: flex; width: 1449px; align-items: center; }
.fav { flex: 1 1 0; height: 24px; display: flex; justify-content: center; border-right: 2px solid #c4d9f6; }
.fav svg { width: 24px; height: 24px; margin-right: -2px; }
.s-alx { font: 700 12px "DejaVu Sans", sans-serif; fill: #26282b; }
.s-ralx { font: 700 7px "Liberation Sans", sans-serif; fill: #3a3f47; }
.s-b { font: 700 17px "Liberation Sans", sans-serif; fill: #fff; }
.s-f { font: 900 23px "Liberation Sans", sans-serif; fill: #ffdc2e; }
.s-t { font: 700 11px "Liberation Sans", sans-serif; fill: #fff; }
.s-br { font: 700 8px "Liberation Mono", monospace; fill: #1c1c1c; }
.activetab { position: relative; width: 48px; height: 51px; margin-left: 3px; align-self: flex-end; background: #c9dcf7; border-radius: 14px 14px 0 0; display: flex; align-items: center; justify-content: center; padding-bottom: 9px; }
.activetab::before, .activetab::after { content: ""; position: absolute; bottom: 0; width: 12px; height: 12px; }
.activetab::before { left: -12px; background: radial-gradient(circle at 0 0, transparent 11.500px, #c9dcf7 12px); }
.activetab::after { right: -12px; background: radial-gradient(circle at 100% 0, transparent 11.500px, #c9dcf7 12px); }
.unsplash { width: 20px; height: 24px; margin-left: 6px; }
.tabsep { width: 2px; height: 22px; margin-left: 4px; background: #c4d9f6; }
.plus { width: 20px; height: 20px; margin-left: 16px; }
.winctl { display: flex; margin-left: auto; }
.wbtn { width: 69px; height: 40px; display: flex; align-items: center; justify-content: center; }

/* toolbar */
.toolbar { display: flex; align-items: center; height: 70px; padding-left: 6px; background: #c9dcf7; border-radius: 12px 12px 0 0; flex: none; }
.navbtn { width: 54px; height: 50px; display: flex; align-items: center; justify-content: center; }
.omnibox { display: flex; align-items: center; width: 1254px; height: 51px; margin-left: 12px; padding: 0 24px 0 8px; border-radius: 26px; background: #f4f7fc; }
.sitechip { width: 34px; height: 35px; border-radius: 50%; background: #c9dcf7; display: flex; align-items: center; justify-content: center; flex: none; }
.url { flex: 1; min-width: 0; margin-left: 13px; white-space: nowrap; font-size: 20px; line-height: 27px; padding-bottom: 2px; color: #5d6269; overflow: hidden; }
.host { font-weight: 400; color: #1f1f1f; }
.star { width: 24px; height: 24px; }
.tb-puzzle { width: 26px; height: 28px; margin-left: 27px; }
.tb-div { width: 2px; height: 23px; margin-left: 25px; background: #85ace9; flex: none; }
.tb-dl { width: 26px; height: 26px; margin-left: 27px; }
.tb-side { width: 24px; height: 24px; margin-left: 30px; }
.avatar { width: 30px; height: 30px; margin-left: 26px; border-radius: 50%; background: #01513d; color: #e8f0ec; font-size: 15px; display: flex; align-items: center; justify-content: center; flex: none; }
.relaunch { display: flex; align-items: center; width: 216px; height: 51px; margin-left: 18px; padding: 0 0 2px 18px; border-radius: 26px; background: #85ace9; font-size: 17px; white-space: nowrap; }
.relaunch span { letter-spacing: -0.08px; }
.dots { width: 6px; height: 24px; margin-left: auto; margin-right: 21px; fill: #1f1f1f; }

/* bookmarks */
.bookmarks { display: flex; align-items: center; height: 50px; padding: 0 0 10px 19px; background: #c9dcf7; flex: none; }
.bm { display: flex; align-items: center; gap: 10px; font-size: 17.200px; line-height: 24px; white-space: nowrap; letter-spacing: -0.2px; flex: none; }
.bm:nth-child(1) { width: 230px; }
.bm:nth-child(2) { width: 226px; }
.bm:nth-child(3) { width: 232px; }
.bm:nth-child(4) { width: 226px; }
.bm:nth-child(5) { width: 230px; }
.bm:nth-child(6) { width: 209.500px; }
.bm:nth-child(7) { width: 139.500px; }
.bm-ic { width: 22px; height: 24px; display: flex; align-items: center; justify-content: center; flex: none; }
.more { width: 16px; height: 16px; margin-left: auto; margin-right: 46px; }
.chrome-sep { height: 2px; background: #a9b8d2; flex: none; }

/* viewport */
.viewport { position: relative; flex: 1; min-height: 0; display: flex; background: #dcdcdc; }
.gutter { width: 45px; flex: none; }
.page { width: 1127px; flex: none; background: #fff; }
.margin-right { flex: 1; }
.doc { width: 845px; margin: 0 0 0 82px; font-family: "Liberation Serif", "DejaVu Serif", serif; font-size: 19.300px; line-height: 24px; color: #0d0d0d; }
.doc p { margin: 0; }
.tbl-title { text-align: center; white-space: nowrap; line-height: 12px; }

.data { width: 841px; margin: 18px 0 0 3px; border-collapse: collapse; table-layout: fixed; border: 3px solid #000; font-size: 16.700px; line-height: 17px; }
.c1 { width: 79px; } .c2 { width: 176px; } .c3 { width: 129px; } .c4 { width: 59px; } .c5 { width: 105px; } .c6 { width: 83px; } .c7 { width: 152px; } .c8 { width: 58px; }
.data th { font-weight: 400; padding: 0; border: 1.500px solid #000; text-align: center; font-size: 18.700px; }
.data th.blank { border-right-width: 3px; }
.h1 { height: 29px; }
.h1 th { vertical-align: top; padding-top: 4px; }
.h2 { height: 24px; }
.h2 th { border-bottom: 4px solid #000; padding-top: 0; vertical-align: top; }
.h1 th.blank, .h1 th.tot { border-bottom: 4px solid #000; }
.data td { padding: 0 5px 0 0; border-left: 1.500px solid #000; text-align: right; vertical-align: middle; }
.data td.lbl { border-left: 0; text-align: left; padding-left: 4px; }
.data td.lbl-loc { padding-bottom: 4px; }
.data td.lbl2 { border-left: 0; text-align: left; padding-left: 4px; border-right: 1.500px solid #000; white-space: nowrap; }
.data td.last { padding-right: 3px; }
.data td.grand { padding-right: 8px; }
.r1 { height: 28px; } .r2 { height: 24px; } .r3 { height: 22px; } .r4 { height: 17px; }

.source { margin: 1px 0 0 0 !important; white-space: nowrap; }
.caption { margin: 9px 0 0 66px !important; white-space: nowrap; }
.chart { width: 607px; height: 258px; margin: 12px 0 0 119px; border: 1px solid #000; background: #fff; }
.chart svg { filter: blur(.35px); }
.b1 { fill: #3e58ac; } .b2 { fill: #2eb848; } .b3 { fill: #d5cf92; } .b4 { fill: #7d2878; } .b5 { fill: #fbf873; }
.ax text { font: 400 7.500px "Liberation Sans", sans-serif; fill: #222; }
.axb text { font: 700 9px "Liberation Sans", sans-serif; fill: #111; }
.axb text.ax-count { font-size: 11px; }

.cols { display: flex; justify-content: space-between; margin-top: 14.500px; }
.col { width: 400px; line-height: 24.500px; }
.col-r { width: 399px; margin-right: 0; }
.ln { display: block; white-space: nowrap; text-align: justify; text-align-last: justify; }
.pageno { margin: 18px 0 0 !important; text-align: right; }

.rule-top { display: flex; margin-top: 78px; }
.rt-a { width: 490px; height: 2px; background: #b0b0b0; }
.rt-b { width: 42px; height: 1px; background: #c4c4c4; }
.rule-bottom { height: 1.500px; margin: 15px 28px 0; background: #dedede; }

/* scrollbar */
.scrollbar { width: 25px; flex: none; background: #f1f1f1; display: flex; flex-direction: column; align-items: center; }
.sb-up, .sb-down { width: 0; height: 0; border-left: 5.500px solid transparent; border-right: 5.500px solid transparent; flex: none; }
.sb-up { margin-top: 9px; border-bottom: 5px solid #505050; }
.sb-down { margin-bottom: 10px; border-top: 5px solid #505050; }
.sb-track { flex: 1; width: 100%; padding: 371px 2px 0; }
.sb-thumb { display: block; width: 21px; height: 26px; background: #c1c1c1; }

/* sticky action bar */
.sticky { position: absolute; left: 0; top: 0; right: 25px; height: 77px; padding: 8px 0 0 48px; display: flex; gap: 30px; background: rgba(255,255,255,.88); box-shadow: 0 1px 3px rgba(0,0,0,.2); }
.cta { height: 61px; padding-bottom: 2px; display: flex; align-items: center; justify-content: center; gap: 16px; border: 1px solid #0080ff; border-radius: 2px; color: #0080ff; font: 400 21px "Liberation Sans", Arial, sans-serif; white-space: nowrap; flex: none; }
.cta:nth-child(1) { width: 337px; }
.cta:nth-child(2) { width: 247px; }
.cta:nth-child(3) { width: 287px; }
.cta:nth-child(4) { width: 209px; }
.cta.primary { background: #0080ff; color: #fff; }
.cta-mid { margin-left: 1px; }
.cta-link { gap: 13px; padding-right: 3px; }
.cta-ic { width: 20px; height: 30px; }
.cta-ic.wide { width: 26px; height: 24px; }

/* taskbar */
.taskbar { height: 72px; flex: none; display: flex; align-items: center; border-top: 2px solid #3b3b3b; background: linear-gradient(90deg, #1c1c1c 0, #1c1c1c 72%, #2a1c1c 84%, #431b17 94%, #3a1a17 100%); color: #fff; }
.weather { position: relative; width: 276px; height: 70px; flex: none; padding: 13px 0 0 13px; }
.wx { width: 40px; height: 40px; }
.temp { position: absolute; left: 28px; top: 8px; width: 34px; height: 24px; border-radius: 12px; background: #262626; font-size: 17px; display: flex; align-items: center; justify-content: center; letter-spacing: -.3px; }
.apps { display: flex; flex: none; }
.app-i { position: relative; width: 66.200px; height: 70px; display: flex; align-items: center; justify-content: center; padding-bottom: 2px; }
.ti { width: 40px; height: 40px; position: relative; }
.on::after { content: ""; position: absolute; left: 29px; bottom: 6px; width: 8px; height: 5px; border-radius: 3px; background: #8a8a8a; }
.s-hp { font: 400 10px "Liberation Sans", sans-serif; fill: #fff; }
.s-hp2 { font: italic 700 17px "Liberation Sans", sans-serif; }
.s-q { font: 700 29px "Liberation Sans", sans-serif; fill: #fff; }
.s-ij { font: 700 13px "Liberation Mono", monospace; fill: #fff; }
.s-o { font: 700 16px "Liberation Sans", sans-serif; fill: #fff; }
.stack-b { position: absolute; left: 12px; top: 4px; width: 54px; height: 60px; border-radius: 8px; background: #282828; }
.stack-f { position: absolute; left: 4px; top: 4px; width: 52px; height: 60px; border-radius: 8px; background: #2f2f2f; }
.chrome::after { content: ""; position: absolute; left: 21px; bottom: 6px; width: 24px; height: 5px; border-radius: 3px; background: #4cc2ff; }
.chrome-e { position: absolute; left: 31px; top: 10px; width: 24px; height: 24px; border-radius: 50%; background: #0d5b4a; color: #cfe3dc; font-size: 14px; display: flex; align-items: center; justify-content: center; }
.tray { display: flex; align-items: center; flex: 1; min-width: 0; height: 70px; color: #fff; }
.tr { width: 24px; height: 24px; }
.tr-chev { margin-left: 30px; }
.tr-sync { position: relative; width: 26px; height: 26px; margin-left: 25px; flex: none; }
.rec { position: absolute; right: -1px; bottom: 0; width: 12px; height: 12px; border-radius: 50%; background: #f00; }
.tr-cloud { margin-left: 21px; }
.lang { display: flex; flex-direction: column; align-items: center; width: 44px; margin-left: 24px; font-size: 16.500px; line-height: 23px; }
.tr-wifi { margin-left: 23px; }
.tr-vol { margin-left: 12px; }
.tr-bat { margin-left: 11px; }
.clock { display: flex; flex-direction: column; align-items: flex-end; width: 105px; margin-left: 13px; font-size: 17.500px; line-height: 23px; }
.badge { width: 23px; height: 23px; margin-left: 11px; border-radius: 50%; background: #4cc2ff; color: #1a1a1a; font-size: 14.500px; display: flex; align-items: center; justify-content: center; flex: none; }
```
